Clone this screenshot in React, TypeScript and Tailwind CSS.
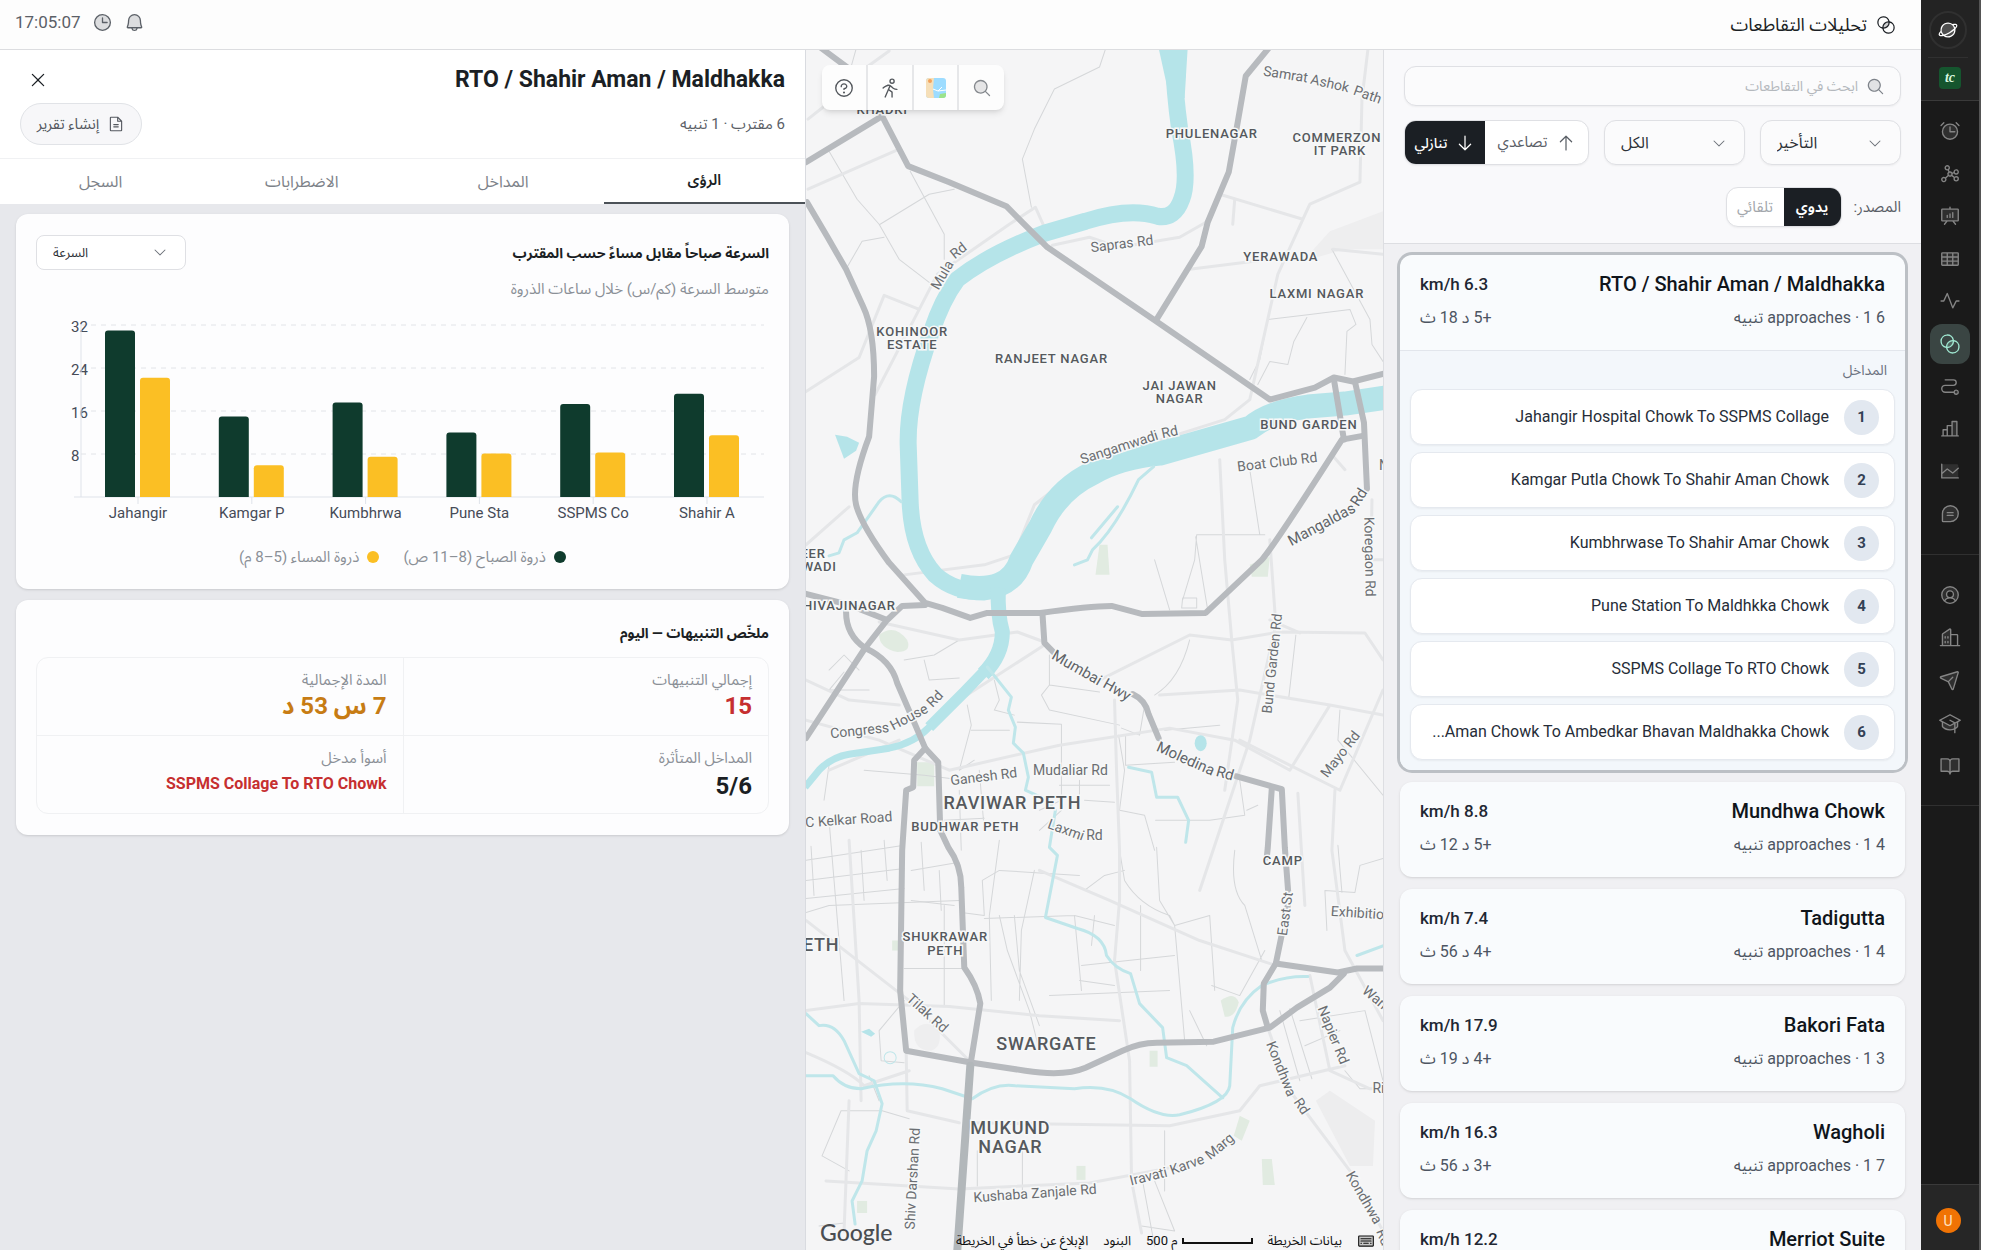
import type { ReactNode } from "react";
import {
  PiAlarmDuotone,
  PiArrowDown,
  PiArrowUp,
  PiBellDuotone,
  PiBookOpenDuotone,
  PiBuildingsDuotone,
  PiCaretDown,
  PiChartBarDuotone,
  PiChartLineDuotone,
  PiChatTeardropTextDuotone,
  PiClockDuotone,
  PiFileText,
  PiGraduationCapDuotone,
  PiGraphDuotone,
  PiGridNineDuotone,
  PiIntersectDuotone,
  PiKeyboardDuotone,
  PiMagnifyingGlassDuotone,
  PiPaperPlaneTiltDuotone,
  PiPathDuotone,
  PiPersonSimpleWalk,
  PiPlanetDuotone,
  PiPresentationChartDuotone,
  PiPulse,
  PiQuestion,
  PiUserCircleDuotone,
  PiX,
} from "react-icons/pi";

interface Intersection {
  name: string;
  speed: string;
  delay: string;
  approaches: number;
}

const intersections: Intersection[] = [
  { name: "RTO / Shahir Aman / Maldhakka", speed: "6.3", delay: "+5 د 18 ث", approaches: 6 },
  { name: "Mundhwa Chowk", speed: "8.8", delay: "+5 د 12 ث", approaches: 4 },
  { name: "Tadigutta", speed: "7.4", delay: "+4 د 56 ث", approaches: 4 },
  { name: "Bakori Fata", speed: "17.9", delay: "+4 د 19 ث", approaches: 3 },
  { name: "Wagholi", speed: "16.3", delay: "+3 د 56 ث", approaches: 7 },
  { name: "Merriot Suite", speed: "12.2", delay: "+3 د 41 ث", approaches: 5 },
];

const approaches = [
  "Jahangir Hospital Chowk To SSPMS Collage",
  "Kamgar Putla Chowk To Shahir Aman Chowk",
  "Kumbhrwase To Shahir Amar Chowk",
  "Pune Station To Maldhkka Chowk",
  "SSPMS Collage To RTO Chowk",
  "Aman Chowk To Ambedkar Bhavan Maldhakka Chowk...",
];

const speeds = [
  { label: "Jahangir", am: 31, pm: 22.2 },
  { label: "Kamgar P", am: 15, pm: 5.9 },
  { label: "Kumbhrwa", am: 17.6, pm: 7.5 },
  { label: "Pune Sta", am: 12, pm: 8.1 },
  { label: "SSPMS Co", am: 17.3, pm: 8.3 },
  { label: "Shahir A", am: 19.2, pm: 11.5 },
];

const mainNav = [
  { icon: <PiAlarmDuotone />, label: "التنبيهات" },
  { icon: <PiGraphDuotone />, label: "الشبكة" },
  { icon: <PiPresentationChartDuotone />, label: "العروض" },
  { icon: <PiGridNineDuotone />, label: "الجداول" },
  { icon: <PiPulse />, label: "النشاط" },
  { icon: <PiIntersectDuotone />, label: "التقاطعات", active: true },
  { icon: <PiPathDuotone />, label: "المسارات" },
  { icon: <PiChartBarDuotone />, label: "الإحصاءات" },
  { icon: <PiChartLineDuotone />, label: "الاتجاهات" },
  { icon: <PiChatTeardropTextDuotone />, label: "الرسائل" },
];

const accountNav = [
  { icon: <PiUserCircleDuotone />, label: "الحساب" },
  { icon: <PiBuildingsDuotone />, label: "المؤسسة" },
  { icon: <PiPaperPlaneTiltDuotone />, label: "الإرسال" },
  { icon: <PiGraduationCapDuotone />, label: "التدريب" },
  { icon: <PiBookOpenDuotone />, label: "الدليل" },
];

function NavButton({ icon, label, active }: { icon: ReactNode; label: string; active?: boolean }) {
  return (
    <button
      aria-label={label}
      className={
        active
          ? "flex size-10 items-center justify-center rounded-xl bg-[#3a4543] text-[22px] text-[#9fe6d0]"
          : "flex size-10 items-center justify-center rounded-xl text-[22px] text-[#858585]"
      }
    >
      {icon}
    </button>
  );
}

function Sidebar() {
  return (
    <aside className="flex w-[60px] shrink-0 flex-col border-r-2 border-[#555] bg-[#1a1a1a]">
      <div className="flex h-[101px] flex-col items-center border-b border-[#3a3a3a] bg-[#232323] pt-[11px] pr-1">
        <button aria-label="الرئيسية" className="flex size-[38px] items-center justify-center rounded-full border-2 border-[#303030] text-xl text-white">
          <PiPlanetDuotone />
        </button>
        <div className="mt-2 h-px w-10 bg-[#303030]" />
        <a href="#" className="mt-[9px] ml-1 flex size-[22px] items-center justify-center rounded bg-[#15552e] font-['Liberation_Serif',serif] text-sm leading-none font-bold text-[#d6f5dd] italic">
          tc
        </a>
      </div>
      <nav className="flex h-[454px] flex-col items-center justify-between border-b border-[#303030] pt-[10px] pb-5">
        {mainNav.map((n) => (
          <NavButton key={n.label} {...n} />
        ))}
      </nav>
      <nav className="flex h-[251px] flex-col items-center justify-between border-b border-[#303030] pt-5 pb-5">
        {accountNav.map((n) => (
          <NavButton key={n.label} {...n} />
        ))}
      </nav>
      <div className="mt-auto flex h-[66px] items-start justify-center border-t border-[#3a3a3a] bg-[#262626] pt-[23px] pr-1">
        <button className="flex size-[25px] items-center justify-center rounded-full bg-[#f07304] text-sm text-[#ffe3c4]">U</button>
      </div>
    </aside>
  );
}

function Header() {
  return (
    <header className="flex h-[50px] shrink-0 items-center justify-between border-b border-[#dcdde0] bg-[#fdfdfd] pr-[25px] pl-[15px]">
      <h1 className="flex items-center gap-[9px] text-lg text-[#1b1f24]">
        <PiIntersectDuotone className="size-5" />
        تحليلات التقاطعات
      </h1>
      <div className="flex h-11 items-center gap-[11px] self-start text-[#5b6067]">
        <button aria-label="الإشعارات">
          <PiBellDuotone className="size-[21px]" />
        </button>
        <PiClockDuotone className="size-[21px]" />
        <time className="text-[17px]/6">17:05:07</time>
      </div>
    </header>
  );
}

function FilterSelect({ label, value }: { label: string; value: string }) {
  return (
    <div className="relative h-[45px] flex-1">
      <select
        aria-label={label}
        dir="ltr"
        className="size-full appearance-none rounded-xl border border-[#dfe0e4] bg-[#fbfbfc] pl-4 text-base text-[#2d3238] shadow-xs"
      >
        <option>{value}</option>
      </select>
      <PiCaretDown className="pointer-events-none absolute top-[15px] right-[18px] size-4 text-[#6b7078]" />
    </div>
  );
}

function Filters() {
  return (
    <div className="flex flex-col border-b border-[#dddee2] bg-[#f9f9fb] px-5 pt-4 pb-4">
      <label className="flex h-10 items-center gap-2 rounded-xl border border-[#dfe0e4] bg-[#fbfbfc] px-[15px] shadow-xs">
        <PiMagnifyingGlassDuotone className="size-[19px] text-[#7d8289]" />
        <input
          aria-label="بحث"
          placeholder="ابحث في التقاطعات"
          className="min-w-0 flex-1 bg-transparent text-sm outline-none placeholder:text-[#b4b8bd]"
        />
      </label>
      <div className="mt-[14px] flex gap-[15px]">
        <FilterSelect label="الترتيب" value="التأخير" />
        <FilterSelect label="التصفية" value="الكل" />
        <div className="flex h-[45px] w-[185px] overflow-hidden rounded-xl border border-[#dfe0e4] bg-white text-[15px] shadow-xs">
          <button className="flex flex-1 items-center justify-center gap-2 text-[#5b6067]">
            <PiArrowUp className="size-5" />
            تصاعدي
          </button>
          <button className="flex w-20 items-center justify-center gap-2 bg-[#1b1f24] text-sm font-medium text-white">
            <PiArrowDown className="size-5" />
            تنازلي
          </button>
        </div>
      </div>
      <div className="mt-[22px] flex items-center gap-3 text-[15px] text-[#5b6067]">
        <span>المصدر:</span>
        <div className="flex h-10 overflow-hidden rounded-xl border border-[#dfe0e4] bg-white shadow-xs">
          <button className="w-[57px] bg-[#1b1f24] font-semibold text-white">يدوي</button>
          <button className="w-[57px] text-[#a3a7ac]">تلقائي</button>
        </div>
      </div>
    </div>
  );
}

function CardHead({ item }: { item: Intersection }) {
  return (
    <div className="flex h-[95px] justify-between px-5 pt-[13px]">
      <div>
        <h3 className="text-xl/8 font-medium text-[#10151b]">{item.name}</h3>
        <p className="text-base/9 text-[#4d5562]">{item.approaches} approaches · 1 تنبيه</p>
      </div>
      <div className="text-left">
        <p className="text-[17px]/8 font-medium text-[#1f2733]">{item.speed} km/h</p>
        <p className="text-base/9 text-[#4d5562]">{item.delay}</p>
      </div>
    </div>
  );
}

function IntersectionList() {
  return (
    <section className="flex w-[538px] shrink-0 flex-col overflow-hidden border-l border-[#dddee2] bg-[#f0f0f3]">
      <Filters />
      <div className="flex flex-col gap-3 px-4 pt-[11px]">
        <article className="rounded-xl bg-[#f9fbfd] ring-3 ring-[#bcc0c5]">
          <CardHead item={intersections[0]} />
          <div className="rounded-b-xl border-t border-[#e2e6ec] bg-[#f3f7fb] px-[10px] pb-[10px]">
            <h4 className="pt-[7px] pr-2 pb-[7px] text-sm/6 text-[#6b7280]">المداخل</h4>
            <ol className="flex flex-col gap-[7px]">
              {approaches.map((name, i) => (
                <li key={name} className="flex h-14 items-center gap-[15px] rounded-xl border border-[#e5e9ef] bg-white px-[15px] shadow-xs">
                  <span className="flex size-[35px] shrink-0 items-center justify-center rounded-full bg-[#e2e8f0] text-[15px] font-bold text-[#334155]">
                    {i + 1}
                  </span>
                  <span className="whitespace-nowrap text-base text-[#262d38]">{name}</span>
                </li>
              ))}
            </ol>
          </div>
        </article>
        {intersections.slice(1).map((item) => (
          <article key={item.name} className="rounded-xl bg-[#f9fbfd] shadow-sm">
            <CardHead item={item} />
          </article>
        ))}
      </div>
    </section>
  );
}

const arterials = [
  "M808 203 L828 237 L847 270 L864 307 Q875 330 875 377 L870 437 Q852 485 857 505 Q862 525 890 563 L926 603 L943 608 L971 618 L988 613 L1041 613 Q1090 606 1112 606 L1142 614 L1206 613 L1262 560 Q1275 545 1342 440 L1364 436",
  "M807 163 L883 117 L909 167 L950 183 L1007 207 L1048 248 L1154 320 L1270 400 L1315 388 L1334 378 L1353 382 L1384 374",
  "M822 49 L853 72 L883 117",
  "M1269 49 L1246 77 L1238 123 L1229 173 L1208 223 L1202 247 L1157 320",
  "M1334 380 L1344 440 M1355 382 L1364 423 L1367 489",
  "M807 594 L850 605 L888 620 L903 606 L926 605 M888 620 L866 648 L807 738",
  "M847 612 Q847 635 866 648 Q892 660 898 683 L917 727 L926 748 L939 762 L941 830 L949 847 Q962 865 962 887 L965 967 Q978 985 981 1003 L971 1065",
  "M926 748 L915 760 L914 787 L907 790 L903 850 L901 990 L907 1050 L973 1062 L1026 1070 Q1065 1076 1086 1067 L1123 1050 Q1140 1042 1157 1042 L1214 1041 L1270 1027 L1297 1007 L1330 987 L1344 973",
  "M1043 613 L1045 643 L1054 652 M1133 694 Q1146 700 1149 714 L1159 738 M1236 776 L1282 789 L1285 847 L1289 900 L1276 963 L1264 983 L1263 1010 L1268 1027",
  "M1272 788 L1268 847 L1267 857",
  "M1276 963 L1338 972 L1357 968 L1384 968",
];

const streets = [
  "M809 190 L900 150 M809 120 L828 105 L860 70 M865 70 L890 52",
  "M807 392 L860 358 L885 296 L920 310 L876 395 M920 310 L938 275 L1010 225 L1036 208 L1045 228",
  "M1053 246 L1090 238 L1120 248 L1180 238 L1208 222 M1190 270 L1270 260",
  "M1368 50 L1362 100 L1360 183 L1310 205 L1303 220 L1220 195 M1303 220 L1278 275 L1250 400 L1225 420 L1130 450 L1080 470 L1035 505 L1015 555 L985 565 L905 575",
  "M1383 255 L1333 250 M1235 200 L1233 225",
  "M807 545 L850 507 M880 622 L960 640 L1018 632 L1045 642 M1220 460 L1225 560 L1232 640 L1238 700 L1225 790 M1270 540 L1276 625 L1250 740 L1200 890",
  "M960 700 L1045 645 M1100 680 L1190 635 L1232 640 L1280 632 L1365 633 L1383 660",
  "M1160 695 L1240 690 L1330 705 L1383 715 M1330 705 L1290 770 L1235 740 L1170 728 L1060 745 L950 770 L880 740 L807 720",
  "M1240 740 L1340 790 L1383 690 M1298 793 L1305 905 M1335 790 L1332 850 L1345 950 L1383 1020",
  "M1115 700 L1117 770 L1120 850 L1120 900 L1115 960 L1130 1060 L1132 1180 L1142 1232",
  "M807 920 L910 1000 L970 1060 M807 1010 L860 1003 L950 1006 L1040 1015 L1120 1020",
  "M807 1052 Q850 1070 865 1085 L910 1070 M850 840 L860 1000 L862 1100 M907 1050 L908 1110 L960 1122",
  "M973 1122 L1170 1125 L1240 1110 L1260 1085 L1345 1065 M827 1180 L960 1188 L1090 1182 L1180 1165",
  "M1268 1027 L1290 1090 L1350 1170 L1383 1230 M1310 975 L1330 1070 L1370 1088 L1383 1088",
  "M1040 870 L1110 900 L1200 940 L1276 965 M850 1100 L845 1230",
  "M807 680 L850 700 L900 705 M830 770 L900 740 M1270 620 L1300 633",
  "M1383 560 L1371 560 L1372 500 M1345 470 L1332 455",
];

const lanes = [
  "M830 152 L858 200 L880 225 L900 260 L930 283 M881 225 L930 195 L955 190 M911 172 L945 235 L945 260 M848 268 L863 242 L885 238",
  "M1106 50 L1100 68 L1055 90 L1035 130 L1023 160 L1032 208 M857 50 L852 68",
  "M1268 320 L1310 315 L1350 310 L1356 325 L1347 332 L1345 375 M1268 320 L1260 360 L1250 380 M1258 385 L1270 362 L1288 365 L1294 342 L1307 318 M1332 250 L1370 320 L1372 345 L1383 362",
  "M1250 470 L1260 535 M1197 535 L1195 560 L1183 600 M1197 535 L1265 535 M1155 560 L1170 610 M1196 537 L1208 610 M1183 598 L1197 598 L1197 608 L1182 608 Z",
  "M1050 655 L1050 685 L1042 695 L1050 710 L1120 725 M1050 685 L1100 692 M1190 640 Q1180 680 1155 695 M1296 635 L1289 697",
  "M968 705 L972 725 L960 770 L975 760 M972 730 L1010 730 M995 680 L1000 700 L995 710 L1015 715 M1018 722 L1062 724 L1062 800 L1040 810",
  "M905 660 L935 655 L960 640 M925 660 L930 680 L960 678 M860 670 L845 655 L830 670 M845 672 L830 690 L870 690 M865 770 L925 775 L965 780 M830 765 L825 800",
  "M807 860 L905 845 M807 880 L905 868 M807 898 L905 888 M807 912 L830 905 L960 900 M812 846 L815 895 M830 820 L845 1000 M862 850 L865 900 M885 840 L888 880",
  "M912 870 L960 862 M912 900 L955 905 M922 842 L925 890 M940 870 L942 910 M905 968 L965 968 M945 905 L945 1005 M962 912 L985 915 L983 880 L1000 870 L1080 875",
  "M1000 840 L990 915 L992 1000 M1000 915 L1008 950 L1030 1010 L1040 1050 M1015 915 L1020 970 L1040 1025 M1035 870 L1022 930 L1020 1000",
  "M985 918 L1075 915 L1115 925 M1075 915 L1082 990 M1082 965 L1175 955 M1050 995 L1170 990 M1080 980 L1115 985 M1095 915 L1092 945",
  "M1120 850 L1125 880 Q1140 905 1170 915 L1175 925 L1185 1040 M1085 890 L1105 875 L1125 870 M1157 847 L1160 900 L1175 925 L1210 915 L1215 990 M1141 905 L1141 970",
  "M1119 735 L1125 770 L1120 810 L1145 815 L1155 850 M1126 735 L1126 765 L1175 762 M1165 730 L1220 725 M1145 705 L1140 735 L1122 728",
  "M1240 780 L1245 815 L1210 820 L1156 820 M1247 810 L1258 805 M1235 850 Q1230 890 1245 905 L1262 960 M1212 985 L1240 995 L1265 950 M1190 1010 L1207 1045",
  "M842 1110 L883 1110 L910 1118 M842 1110 L823 1155 L850 1170 M978 1150 L978 1185 M1023 1150 L1023 1190 M1165 1130 L1165 1190 M1143 1180 L1155 1245 M1155 1180 L1175 1230 L1142 1225",
  "M1280 1010 L1300 1080 M1290 1008 L1312 1078 M1300 1020 L1365 1010 L1383 1080 M1345 1070 L1360 1088 L1383 1088 M1305 1045 L1340 1030",
  "M1325 890 L1355 892 L1360 865 L1383 858 M1338 845 L1342 892 M1325 890 L1327 930 M1340 710 L1338 740 L1383 795",
  "M1060 785 L1110 785 M1080 780 L1080 810 M1062 810 L1040 830 M1085 800 L1115 802 M980 770 L985 830 M960 790 L962 850 M945 820 L985 818 M915 830 L935 830",
  "M820 1225 L845 1222 M880 1100 L870 1075 M905 1000 L880 1030 L882 1060 L905 1062",
];

const rivers = [
  { d: "M1173 49 Q1175 95 1180 130 Q1190 180 1182 200 Q1175 220 1158 217 Q1130 208 1086 222 L1045 234 Q990 255 958 280 Q943 300 932 333 Q908 400 909 445 L911 503 Q913 550 936 575 Q955 592 985 592 Q1008 588 1016 573 L1041 527 Q1058 490 1094 473", w: 17 },
  { d: "M960 586 Q1010 596 1022 560 L1041 527 Q1058 490 1094 473 Q1120 458 1160 454 L1251 428 Q1270 412 1308 407 L1345 404 L1386 398", w: 24 },
  { d: "M999 588 Q998 615 1003 632 Q1003 655 984 674", w: 15 },
  { d: "M990 666 L965 692 L930 727", w: 11 },
  { d: "M940 717 L930 727 Q915 743 890 748 L850 754 Q832 757 820 770 L806 787", w: 7 },
];

const streams = [
  "M988 667 L1012 697 L1009 710 L1016 727 L1014 743 L1024 753 L1029 777 L1026 790 L1044 798 L1056 810 L1050 847 L1058 855 L1046 917 L1078 928 Q1105 935 1107 955 Q1115 968 1131 973 L1140 1003 L1163 1027 L1167 1057 L1187 1065 L1223 1097",
  "M807 1075 L834 1075 Q845 1088 862 1088 Q905 1078 943 1088 L973 1098 Q995 1082 1016 1085 L1075 1088 Q1108 1083 1131 1098 Q1160 1118 1180 1114 Q1228 1102 1230 1085 L1233 1027 Q1240 1000 1262 985 Q1285 975 1308 976",
  "M807 1013 L820 1025 Q835 1022 845 1040 L860 1073 L875 1080 L883 1103 L877 1130 L868 1150 L863 1180 L853 1200 L856 1223",
  "M1154 467 L1139 480 Q1115 530 1093 550 L1088 560 L1075 565 M1118 507 L1092 538",
  "M902 502 Q890 490 880 502 L858 533 L845 540 L840 553 L830 556",
  "M1129 767 L1152 772 L1157 797 L1178 797 L1189 820 L1186 842",
  "M1357 955 L1384 945",
];

const parks = [
  "M918 762 h17 v24 h-17 Z",
  "M880 635 q15 -12 28 5 q5 12 -10 12 q-18 -4 -18 -17 Z",
  "M1100 545 l8 0 l2 30 h-14 Z",
  "M1250 565 l20 -8 l-2 20 h-16 Z",
  "M1221 1000 q14 -10 18 2 q-4 16 -14 14 Z",
  "M1262 1158 h10 l3 26 h-12 Z",
  "M1240 1115 l10 5 l-8 20 l-8 -5 Z",
  "M1150 1050 h8 v16 h-8 Z",
  "M1077 1165 h9 v14 h-9 Z",
  "M893 940 h9 v10 h-9 Z",
  "M858 1200 h10 v12 h-10 Z",
];

const places = [
  { x: 883, y: 115, text: "KHADKI" },
  { x: 1212, y: 139, text: "PHULENAGAR" },
  { x: 1337, y: 143, text: "COMMERZON" },
  { x: 1340, y: 156, text: "IT PARK" },
  { x: 1281, y: 262, text: "YERAWADA" },
  { x: 1317, y: 299, text: "LAXMI NAGAR" },
  { x: 913, y: 337, text: "KOHINOOR" },
  { x: 913, y: 350, text: "ESTATE" },
  { x: 1052, y: 364, text: "RANJEET NAGAR" },
  { x: 1180, y: 390, text: "JAI JAWAN" },
  { x: 1180, y: 403, text: "NAGAR" },
  { x: 1309, y: 429, text: "BUND GARDEN" },
  { x: 808, y: 558, text: "MEER" },
  { x: 812, y: 571, text: "ALWADI" },
  { x: 846, y: 610, text: "SHIVAJINAGAR" },
  { x: 966, y: 831, text: "BUDHWAR PETH" },
  { x: 946, y: 941, text: "SHUKRAWAR" },
  { x: 946, y: 954, text: "PETH" },
  { x: 1283, y: 865, text: "CAMP" },
];

const districts = [
  { x: 1013, y: 809, text: "RAVIWAR PETH" },
  { x: 1047, y: 1049, text: "SWARGATE" },
  { x: 1011, y: 1133, text: "MUKUND" },
  { x: 1011, y: 1152, text: "NAGAR" },
  { x: 807, y: 950, text: "A PETH" },
];

// long names bend with their road, so they are set word by word
const roadNames = [
  { x: 1285, y: 80, angle: 9, text: "Samrat" },
  { x: 1329, y: 89, angle: 13, text: "Ashok" },
  { x: 1366, y: 100, angle: 20, text: "Path" },
  { x: 1123, y: 249, angle: -7, text: "Sapras Rd" },
  { x: 947, y: 278, angle: -60, text: "Mula" },
  { x: 962, y: 255, angle: -38, text: "Rd" },
  { x: 1121, y: 452, angle: -18, text: "Sangamwadi" },
  { x: 1171, y: 437, angle: -12, text: "Rd" },
  { x: 1278, y: 467, angle: -7, text: "Boat Club Rd" },
  { x: 1365, y: 557, angle: 89, text: "Koregaon Rd" },
  { x: 1277, y: 664, angle: -84, text: "Bund Garden Rd" },
  { x: 1344, y: 757, angle: -52, text: "Mayo Rd" },
  { x: 861, y: 735, angle: -6, text: "Congress" },
  { x: 912, y: 721, angle: -28, text: "House" },
  { x: 939, y: 702, angle: -46, text: "Rd" },
  { x: 985, y: 781, angle: -7, text: "Ganesh Rd" },
  { x: 1071, y: 775, angle: 0, text: "Mudaliar Rd" },
  { x: 1065, y: 834, angle: 20, text: "Laxmi" },
  { x: 1095, y: 840, angle: 0, text: "Rd" },
  { x: 850, y: 824, angle: -4, text: "C Kelkar Road" },
  { x: 925, y: 1016, angle: 42, text: "Tilak Rd" },
  { x: 918, y: 1178, angle: -87, text: "Shiv Darshan Rd" },
  { x: 1036, y: 1197, angle: -4, text: "Kushaba Zanjale Rd" },
  { x: 1150, y: 1180, angle: -14, text: "Iravati" },
  { x: 1189, y: 1168, angle: -20, text: "Karve" },
  { x: 1223, y: 1149, angle: -40, text: "Marg" },
  { x: 1277, y: 1070, angle: 68, text: "Kondhwa" },
  { x: 1298, y: 1108, angle: 56, text: "Rd" },
  { x: 1360, y: 1199, angle: 60, text: "Kondhwa" },
  { x: 1379, y: 1238, angle: 68, text: "Rd" },
  { x: 1329, y: 1036, angle: 68, text: "Napier Rd" },
  { x: 1290, y: 914, angle: -82, text: "East St" },
  { x: 1371, y: 918, angle: 4, text: "Exhibition Rd" },
  { x: 1375, y: 1003, angle: 40, text: "Wano" },
  { x: 1390, y: 1092, angle: 0, text: "Ridge" },
  { x: 1384, y: 470, angle: 0, text: "N" },
];

const highwayNames = [
  { x: 1075, y: 672, angle: 30, text: "Mumbai" },
  { x: 1115, y: 694, angle: 30, text: "Hwy" },
  { x: 1184, y: 763, angle: 24, text: "Moledina" },
  { x: 1224, y: 778, angle: 16, text: "Rd" },
  { x: 1324, y: 529, angle: -28, text: "Mangaldas" },
  { x: 1363, y: 500, angle: -58, text: "Rd" },
];

function CityMap() {
  return (
    <svg viewBox="807 50 576 1200" preserveAspectRatio="xMidYMid slice" direction="ltr" className="absolute inset-0 size-full bg-[#f5f5f6] font-[Roboto,sans-serif]">
      <path d="M1383 212 L1330 232 L1303 262 L1345 250 L1383 250 Z" fill="#eeeeef" />
      <path d="M1316 1100 L1330 1090 L1375 1120 L1373 1165 L1350 1165 Z" fill="#ededee" />
      <path d="M915 1030 q12 -14 25 0 q3 16 -8 20 q-18 0 -17 -20 Z" fill="#eeeeef" />
      {parks.map((d) => (
        <path key={d} d={d} fill="#e1ebe1" />
      ))}
      <g fill="none" strokeLinejoin="round" strokeLinecap="round">
        {lanes.map((d) => (
          <path key={d} d={d} stroke="#d5d7d9" strokeWidth="1" />
        ))}
        {streets.map((d) => (
          <path key={d} d={d} stroke="#e5e6e8" strokeWidth="3" />
        ))}
        {rivers.map((r) => (
          <path key={r.d} d={r.d} stroke="#b5e4e9" strokeWidth={r.w} strokeLinecap="butt" />
        ))}
        {streams.map((d) => (
          <path key={d} d={d} stroke="#bfe6ea" strokeWidth="3" />
        ))}
        <circle cx="891" cy="1057" r="6" stroke="#bfe6ea" strokeWidth="1" />
        {arterials.map((d) => (
          <path key={d} d={d} stroke="#b7babe" strokeWidth="6" />
        ))}
        <path d="M971 1065 L958 1250" stroke="#b2b7ba" strokeWidth="8" />
      </g>
      <path d="M1159 49 h29 l-3 50 h-15 Z" fill="#b5e4e9" />
      <path d="M836 435 l12 2 l12 6 l-3 8 l-12 8 Z" fill="#b5e4e9" />
      <ellipse cx="1201" cy="743" rx="6" ry="8" fill="#b5e4e9" />
      <path d="M862 1031 l8 -3 l6 5 l-4 3 Z" fill="#b5e4e9" />
      <g stroke="#f7f8f8" strokeWidth="3" paintOrder="stroke" textAnchor="middle">
        <g fill="#6b6e72" fontSize="14">
          {roadNames.map((r) => (
            <text key={`${r.x}-${r.y}`} transform={`translate(${r.x} ${r.y}) rotate(${r.angle})`}>{r.text}</text>
          ))}
        </g>
        <g fill="#606468" fontSize="15">
          {highwayNames.map((r) => (
            <text key={`${r.x}-${r.y}`} transform={`translate(${r.x} ${r.y}) rotate(${r.angle})`}>{r.text}</text>
          ))}
        </g>
        <g fill="#55595d" className="font-medium tracking-wider">
          {places.map((p) => (
            <text key={`${p.x}-${p.y}`} x={p.x} y={p.y} fontSize="13">{p.text}</text>
          ))}
          {districts.map((p) => (
            <text key={`${p.x}-${p.y}`} x={p.x} y={p.y} fontSize="18">{p.text}</text>
          ))}
        </g>
      </g>
    </svg>
  );
}

function MapThumb() {
  return (
    <svg viewBox="0 0 20 20" className="size-5">
      <rect width="20" height="20" rx="3" fill="#9ddcff" />
      <path d="M3 0 H8 L7 11 L8 20 H3 Q0 20 0 17 V3 Q0 0 3 0 Z" fill="#f6dfb8" />
      <path d="M7 11 L12 13 L20 12 M12 13 L16 9" stroke="#fff" strokeWidth="1" fill="none" />
      <path d="M13 20 L14 16 L20 15 V17 Q20 20 17 20 Z" fill="#9be38b" />
      <circle cx="4" cy="3" r="2" fill="#f2a25c" />
    </svg>
  );
}

function MapPanel() {
  return (
    <section className="relative min-w-0 flex-1 overflow-hidden">
      <CityMap />
      <div dir="ltr" className="absolute top-[15px] left-4 flex h-[45px] divide-x-2 divide-[#e6e7e9] overflow-hidden rounded-lg bg-[#fdfdfd] text-[22px] text-[#54585d] shadow-md">
        <button aria-label="مساعدة" className="flex w-[46px] items-center justify-center">
          <PiQuestion />
        </button>
        <button aria-label="مشاة" className="flex w-[46px] items-center justify-center">
          <PiPersonSimpleWalk />
        </button>
        <button aria-label="نوع الخريطة" className="flex w-[45px] items-center justify-center">
          <MapThumb />
        </button>
        <button aria-label="بحث" className="flex w-[45px] items-center justify-center text-xl text-[#85898e]">
          <PiMagnifyingGlassDuotone />
        </button>
      </div>
      <div className="absolute bottom-1 left-[14px] font-[Lato,sans-serif] text-[23px] leading-7 font-medium text-[#4a4d51]">Google</div>
      <div className="absolute right-2 -bottom-px flex h-5 items-center gap-[15px] whitespace-nowrap text-[13px] text-[#111]">
        <PiKeyboardDuotone className="size-[18px]" />
        <span>بيانات الخريطة</span>
        <span dir="ltr" className="flex items-center gap-1">
          500 م
          <span className="h-[6px] w-[71px] border-2 border-t-0 border-[#111]" />
        </span>
        <a href="#">البنود</a>
        <a href="#">الإبلاغ عن خطأ في الخريطة</a>
      </div>
    </section>
  );
}

function SpeedChart() {
  const base = 182;
  const scale = 172 / 32;
  return (
    <svg viewBox="0 0 733 214" direction="ltr" className="block w-full text-[15px]">
      {[32, 24, 16, 8].map((v) => (
        <g key={v}>
          <line x1="45" x2="728" y1={base - v * scale} y2={base - v * scale} stroke="#e2e4e8" strokeDasharray="5 5" />
          <text x="35" y={base - v * scale + 7} fill="#464b57">{v}</text>
        </g>
      ))}
      <line x1="45" x2="45" y1="10" y2={base} stroke="#dfe3ea" />
      <line x1="38" x2="728" y1={base} y2={base} stroke="#dfe3ea" />
      {speeds.map((s, i) => {
        const x = 69 + i * 113.8;
        return (
          <g key={s.label}>
            <path d={`M${x} ${base} V${base - s.am * scale + 3} q0 -3 3 -3 h24 q3 0 3 3 V${base} Z`} fill="#0f3b2d" />
            <path d={`M${x + 35} ${base} V${base - s.pm * scale + 3} q0 -3 3 -3 h24 q3 0 3 3 V${base} Z`} fill="#fbbf24" />
            <line x1={x + 33} x2={x + 33} y1={base} y2={base + 7} stroke="#dfe3ea" />
            <text x={x + 33} y={base + 21} textAnchor="middle" fill="#464b57">{s.label}</text>
          </g>
        );
      })}
    </svg>
  );
}

function DetailPanel() {
  return (
    <section className="flex w-[806px] shrink-0 flex-col border-r border-[#d9dbe0] bg-[#e7e8ec]">
      <div className="bg-white">
        <div className="flex h-[109px] justify-between border-b border-[#f0f1f3] px-5 pt-3">
          <div>
            <h2 className="text-[23px]/9 font-bold text-[#1b1f24]">RTO / Shahir Aman / Maldhakka</h2>
            <p className="mt-[14px] text-[15px]/6 text-[#5b6067]">6 مقترب · 1 تنبيه</p>
          </div>
          <div className="flex flex-col items-end gap-[5px]">
            <button aria-label="إغلاق" className="flex size-9 items-center justify-center text-xl text-[#1b1f24]">
              <PiX />
            </button>
            <button className="flex h-[42px] w-[122px] items-center justify-center gap-2 rounded-full border border-[#e1e3e7] bg-[#f7f7f9] text-[15px] text-[#54585f]">
              <PiFileText className="size-[18px]" />
              إنشاء تقرير
            </button>
          </div>
        </div>
        <div role="tablist" className="grid h-[45px] grid-cols-4 text-base text-[#7d8289]">
          <button role="tab" aria-selected className="border-b-2 border-[#4b5157] text-[15px] font-semibold text-[#1b1f24]">الرؤى</button>
          <button role="tab">المداخل</button>
          <button role="tab">الاضطرابات</button>
          <button role="tab">السجل</button>
        </div>
      </div>
      <div className="flex flex-col gap-[11px] px-4 pt-[10px]">
        <article className="h-[375px] rounded-xl bg-[#fdfdfe] px-5 pt-[21px] shadow-sm">
          <div className="flex items-start justify-between">
            <div>
              <h3 className="text-sm/9 font-bold text-[#1b1f24]">السرعة صباحاً مقابل مساءً حسب المقترب</h3>
              <p className="text-[15px]/9 text-[#8b9097]">متوسط السرعة (كم/س) خلال ساعات الذروة</p>
            </div>
            <div className="relative h-[35px] w-[150px]">
              <select aria-label="المقياس" dir="ltr" className="size-full appearance-none rounded-lg border border-[#dfe0e4] bg-white pl-4 text-[13px] text-[#2d3238]">
                <option>السرعة</option>
              </select>
              <PiCaretDown className="pointer-events-none absolute top-[9px] right-[18px] size-4 text-[#6b7078]" />
            </div>
          </div>
          <div className="mt-2">
            <SpeedChart />
          </div>
          <div className="mt-4 flex justify-center gap-6 text-[15px]/6 text-[#8b9097]">
            <span className="flex items-center gap-2">
              <i className="size-3 rounded-full bg-[#0f3b2d]" />
              ذروة الصباح (8–11 ص)
            </span>
            <span className="flex items-center gap-2">
              <i className="size-3 rounded-full bg-[#fbbf24]" />
              ذروة المساء (5–8 م)
            </span>
          </div>
        </article>
        <article className="h-[235px] rounded-xl bg-[#fdfdfe] px-5 pt-[19px] shadow-sm">
          <h3 className="text-sm/7 font-bold text-[#1b1f24]">ملخّص التنبيهات — اليوم</h3>
          <dl className="mt-[10px] grid h-[157px] grid-cols-2 grid-rows-2 overflow-hidden rounded-xl border border-[#f0f1f3]">
            <div className="border-b border-l border-[#f0f1f3] px-4 pt-[10px]">
              <dt className="text-[15px]/6 text-[#8b9097]">إجمالي التنبيهات</dt>
              <dd className="text-2xl/7 font-bold text-[#c62f30]">15</dd>
            </div>
            <div className="border-b border-[#f0f1f3] px-4 pt-[10px]">
              <dt className="text-[15px]/6 text-[#8b9097]">المدة الإجمالية</dt>
              <dd className="text-2xl/7 font-bold text-[#c77c14]">7 س 53 د</dd>
            </div>
            <div className="border-l border-[#f0f1f3] px-4 pt-[10px]">
              <dt className="text-[15px]/6 text-[#8b9097]">المداخل المتأثرة</dt>
              <dd className="text-2xl/8 font-bold text-[#1b1f24]">5/6</dd>
            </div>
            <div className="px-4 pt-[10px]">
              <dt className="text-[15px]/6 text-[#8b9097]">أسوأ مدخل</dt>
              <dd className="text-base/7 font-bold text-[#c62f30]">SSPMS Collage To RTO Chowk</dd>
            </div>
          </dl>
        </article>
      </div>
    </section>
  );
}

export default function App() {
  return (
    <div dir="rtl" className="flex h-screen overflow-hidden bg-white pr-[19px] font-[Roboto,'Noto_Sans_Arabic','DejaVu_Sans',sans-serif]">
      <Sidebar />
      <div className="flex min-w-0 flex-1 flex-col">
        <Header />
        <main className="flex min-h-0 flex-1">
          <IntersectionList />
          <MapPanel />
          <DetailPanel />
        </main>
      </div>
    </div>
  );
}
